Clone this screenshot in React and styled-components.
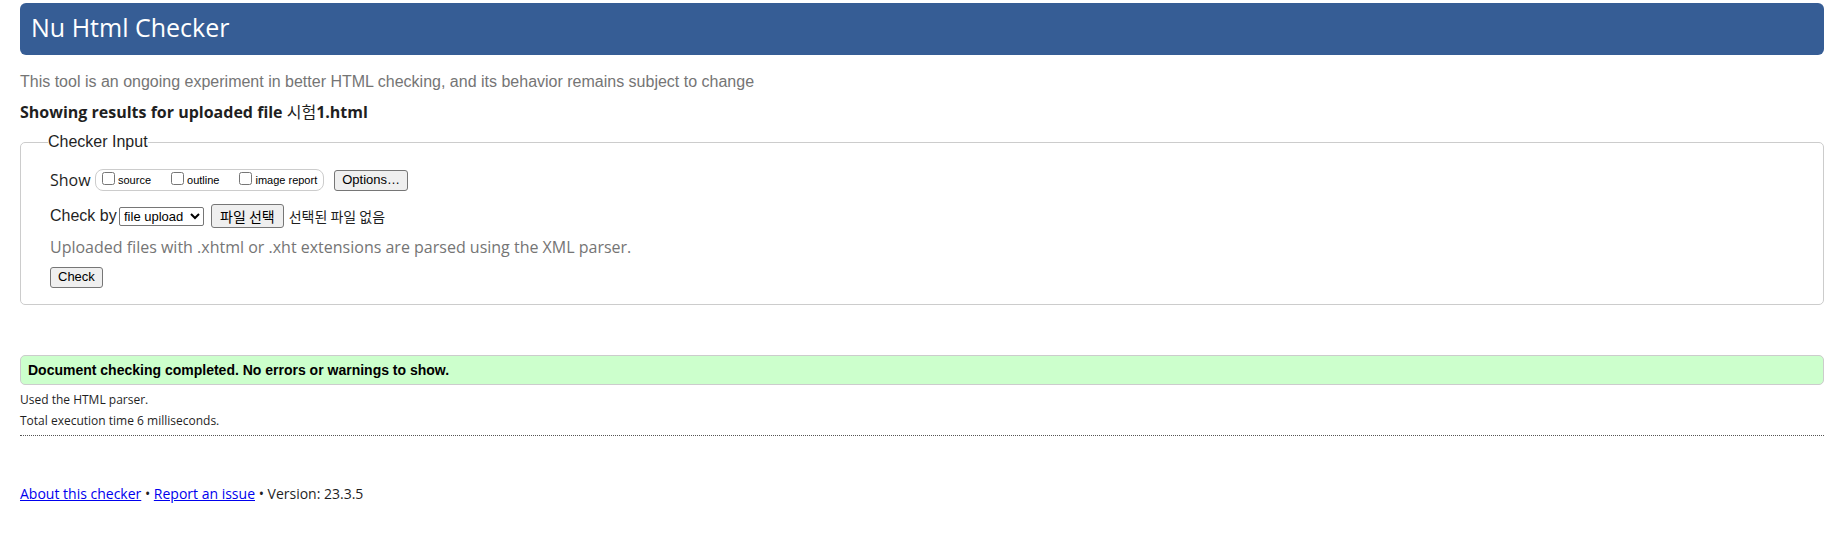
import React from "react";
import styled, { createGlobalStyle, css } from "styled-components";

const sans = '"Liberation Sans", "Noto Sans CJK KR", sans-serif';
const humanist = '"Open Sans", "Noto Sans CJK KR", sans-serif';

const GlobalStyle = createGlobalStyle`
  *, *::before, *::after { box-sizing: border-box; }
  body {
    margin: 0;
    background: #fff;
    color: #1f1f1f;
    font: 16px/24px ${humanist};
  }
`;

const Page = styled.div`
  padding: 3px 9px 24px 20px;
`;

const Banner = styled.header`
  padding: 8px 11px 12px;
  border-radius: 6px;
  background: #365d95;
`;

const Title = styled.h1`
  margin: 0;
  color: #fff;
  font-size: 25px;
  font-weight: 400;
  line-height: 32px;
`;

const Tagline = styled.p`
  margin: 15px 0 6px;
  color: #757575;
  font-family: ${sans};
`;

const Subject = styled.h2`
  margin: 0 0 8px;
  font-size: 16px;
  font-weight: 700;
  line-height: 24px;
`;

const FileName = styled.span`
  font-weight: 400;
`;

const InputGroup = styled.fieldset`
  margin: 0;
  padding: 16px 29px 15px;
  min-width: 0;
  border: 1px solid #ccc;
  border-radius: 5px;
`;

const Legend = styled.legend`
  margin-left: -2px;
  padding: 0;
  font-family: ${sans};
  line-height: 20px;
`;

const Row = styled.div`
  display: flex;
  align-items: center;
  height: 24px;
  margin-bottom: ${(p) => p.$gap || 0}px;
`;

const ShowLabel = styled.span`
  width: 45px;
`;

const ShowOptions = styled.div`
  display: flex;
  align-items: center;
  gap: 20px;
  height: 22px;
  padding: 0 6px;
  margin-right: 10px;
  border: 1px solid #ccc;
  border-radius: 8px;
`;

const CheckLabel = styled.label`
  display: flex;
  align-items: center;
  gap: 3px;
  color: #000;
  font-family: ${sans};
  font-size: 11px;
  line-height: 20px;

  input {
    width: 13px;
    height: 13px;
    margin: 0 0 3px;
  }
`;

const control = css`
  border: 1px solid #767676;
  border-radius: 3px;
  color: #000;
  font-family: ${sans};
  font-size: 13px;
`;

const Button = styled.button`
  ${control}
  height: 21px;
  padding: 0 7px;
  background: #efefef;
  line-height: 18px;
`;

const MethodLabel = styled.label`
  width: 69px;
  font-family: ${sans};
`;

const MethodSelect = styled.select`
  ${control}
  width: 85px;
  height: 19px;
  margin: 0 7px 0 0;
  padding: 0;
  border-radius: 2px;
  background: #fff;
`;

const FilePicker = styled.label`
  display: flex;
  align-items: center;
  gap: 5px;
  font-family: "Noto Sans CJK KR", sans-serif;
  font-size: 14px;

  input {
    position: absolute;
    width: 1px;
    height: 1px;
    opacity: 0;
  }
`;

const PickerButton = styled.span`
  ${control}
  height: 24px;
  padding: 0 8px;
  background: #efefef;
  font-family: inherit;
  font-size: 14px;
  line-height: 22px;
`;

const Hint = styled.p`
  margin: 7px 0 6px;
  color: #757575;
`;

const Success = styled.p`
  margin: 50px 0 4px;
  padding: 4px 7px;
  border: 1px solid #ccc;
  border-radius: 5px;
  background: #cfc;
  color: #000;
  font-family: ${sans};
  font-size: 14px;
  font-weight: 700;
  line-height: 20px;
`;

const Stat = styled.p`
  margin: 0;
  font-size: 12px;
  line-height: 21px;
`;

const Divider = styled.hr`
  margin: 4px 0 46px;
  border: 0;
  border-top: 1px dotted #555;
`;

const Footer = styled.footer`
  font-size: 14px;

  a {
    color: #0000ee;
  }
`;

const views = ["source", "outline", "image report"];

export default function App() {
  return (
    <Page>
      <GlobalStyle />
      <Banner>
        <Title>Nu Html Checker</Title>
      </Banner>
      <main>
        <Tagline>
          This tool is an ongoing experiment in better HTML checking, and its
          behavior remains subject to change
        </Tagline>
        <Subject>
          Showing results for uploaded file <FileName>시험</FileName>1.html
        </Subject>
        <form onSubmit={(e) => e.preventDefault()}>
          <InputGroup>
            <Legend>Checker Input</Legend>
            <Row $gap={12}>
              <ShowLabel>Show</ShowLabel>
              <ShowOptions>
                {views.map((view) => (
                  <CheckLabel key={view}>
                    <input type="checkbox" name={view} />
                    {view}
                  </CheckLabel>
                ))}
              </ShowOptions>
              <Button type="button">Options…</Button>
            </Row>
            <Row>
              <MethodLabel htmlFor="method">Check by</MethodLabel>
              <MethodSelect id="method" defaultValue="file">
                <option value="address">address</option>
                <option value="file">file upload</option>
                <option value="text">text input</option>
              </MethodSelect>
              <FilePicker>
                <input type="file" />
                <PickerButton>파일 선택</PickerButton>
                선택된 파일 없음
              </FilePicker>
            </Row>
            <Hint>
              Uploaded files with .xhtml or .xht extensions are parsed using the
              XML parser.
            </Hint>
            <Row>
              <Button type="submit">Check</Button>
            </Row>
          </InputGroup>
        </form>
        <Success>
          Document checking completed. No errors or warnings to show.
        </Success>
        <Stat>Used the HTML parser.</Stat>
        <Stat>Total execution time 6 milliseconds.</Stat>
      </main>
      <Divider />
      <Footer>
        <a href="#about">About this checker</a> •{" "}
        <a href="#issue">Report an issue</a> • Version: 23.3.5
      </Footer>
    </Page>
  );
}
